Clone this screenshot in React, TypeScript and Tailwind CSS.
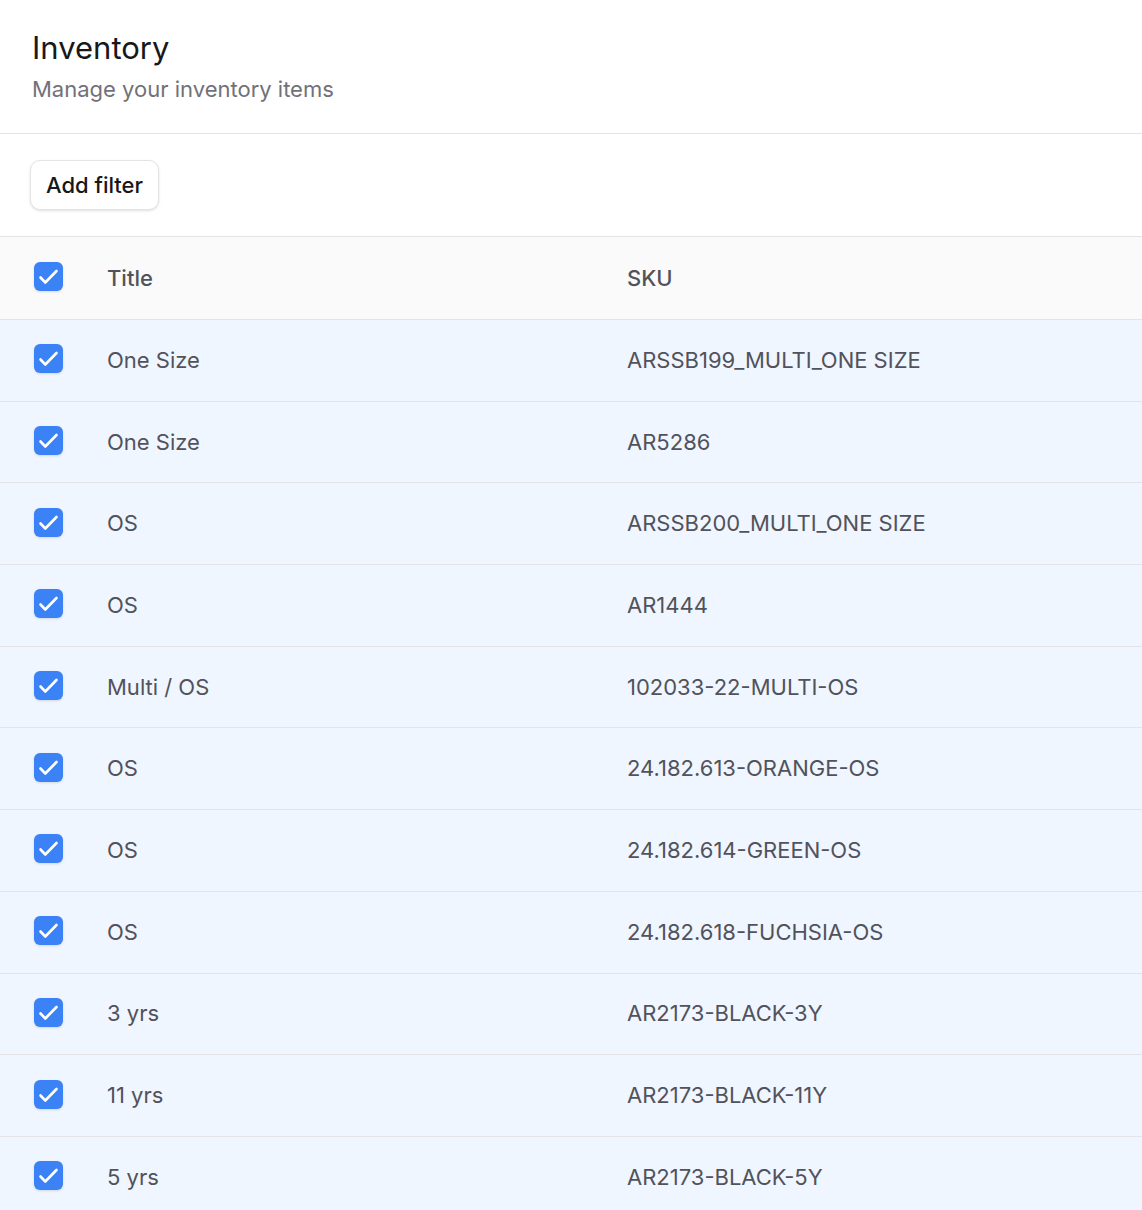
import React from 'react';

const rows = [
  { title: 'One Size', sku: 'ARSSB199_MULTI_ONE SIZE' },
  { title: 'One Size', sku: 'AR5286' },
  { title: 'OS', sku: 'ARSSB200_MULTI_ONE SIZE' },
  { title: 'OS', sku: 'AR1444' },
  { title: 'Multi / OS', sku: '102033-22-MULTI-OS' },
  { title: 'OS', sku: '24.182.613-ORANGE-OS' },
  { title: 'OS', sku: '24.182.614-GREEN-OS' },
  { title: 'OS', sku: '24.182.618-FUCHSIA-OS' },
  { title: '3 yrs', sku: 'AR2173-BLACK-3Y' },
  { title: '11 yrs', sku: 'AR2173-BLACK-11Y' },
  { title: '5 yrs', sku: 'AR2173-BLACK-5Y' },
];

const Checkbox = () => (
  <div className="w-[29px] h-[29px] rounded-[6px] bg-[#3b82f6] shadow-sm">
    <svg width="29" height="29" viewBox="0 0 29 29" fill="none" stroke="white" strokeWidth="2.6" strokeLinecap="round" strokeLinejoin="round">
      <path d="M6.5 15.5l4.8 5L22.5 9" />
    </svg>
  </div>
);

export default function App() {
  return (
    <div className="w-[1142px] bg-white font-['Inter','Liberation_Sans',sans-serif]">
      <div className="px-[32px] pt-[30px] pb-[29px] border-b border-[#e4e4e7]">
        <h1 className="text-[31px] leading-[36px] text-[#18181b] font-normal">Inventory</h1>
        <p className="mt-[8px] text-[22px] leading-[30px] text-[#71717a]">Manage your inventory items</p>
      </div>
      <div className="px-[30px] pt-[26px] pb-[26px] border-b border-[#e4e4e7]">
        <button className="h-[50px] px-[15px] rounded-[10px] border border-[#e4e4e7] bg-white shadow-sm text-[22px] font-medium text-[#18181b]">
          Add filter
        </button>
      </div>
      <div className="grid grid-cols-[107px_520px_1fr] items-center h-[83px] bg-[#fafafa] border-b border-[#e4e4e7] text-[22px] font-medium text-[#52525b]">
        <div className="pl-[34px] pb-[4px]"><Checkbox /></div>
        <div>Title</div>
        <div>SKU</div>
      </div>
      {rows.map((r, i) => (
        <div key={i} className="grid grid-cols-[107px_520px_1fr] items-center h-[81.7px] bg-[#eff6ff] border-b border-[#e4e4e7] text-[22px] text-[#52525b]">
          <div className="pl-[34px] pb-[3px]"><Checkbox /></div>
          <div>{r.title}</div>
          <div>{r.sku}</div>
        </div>
      ))}
    </div>
  );
}
